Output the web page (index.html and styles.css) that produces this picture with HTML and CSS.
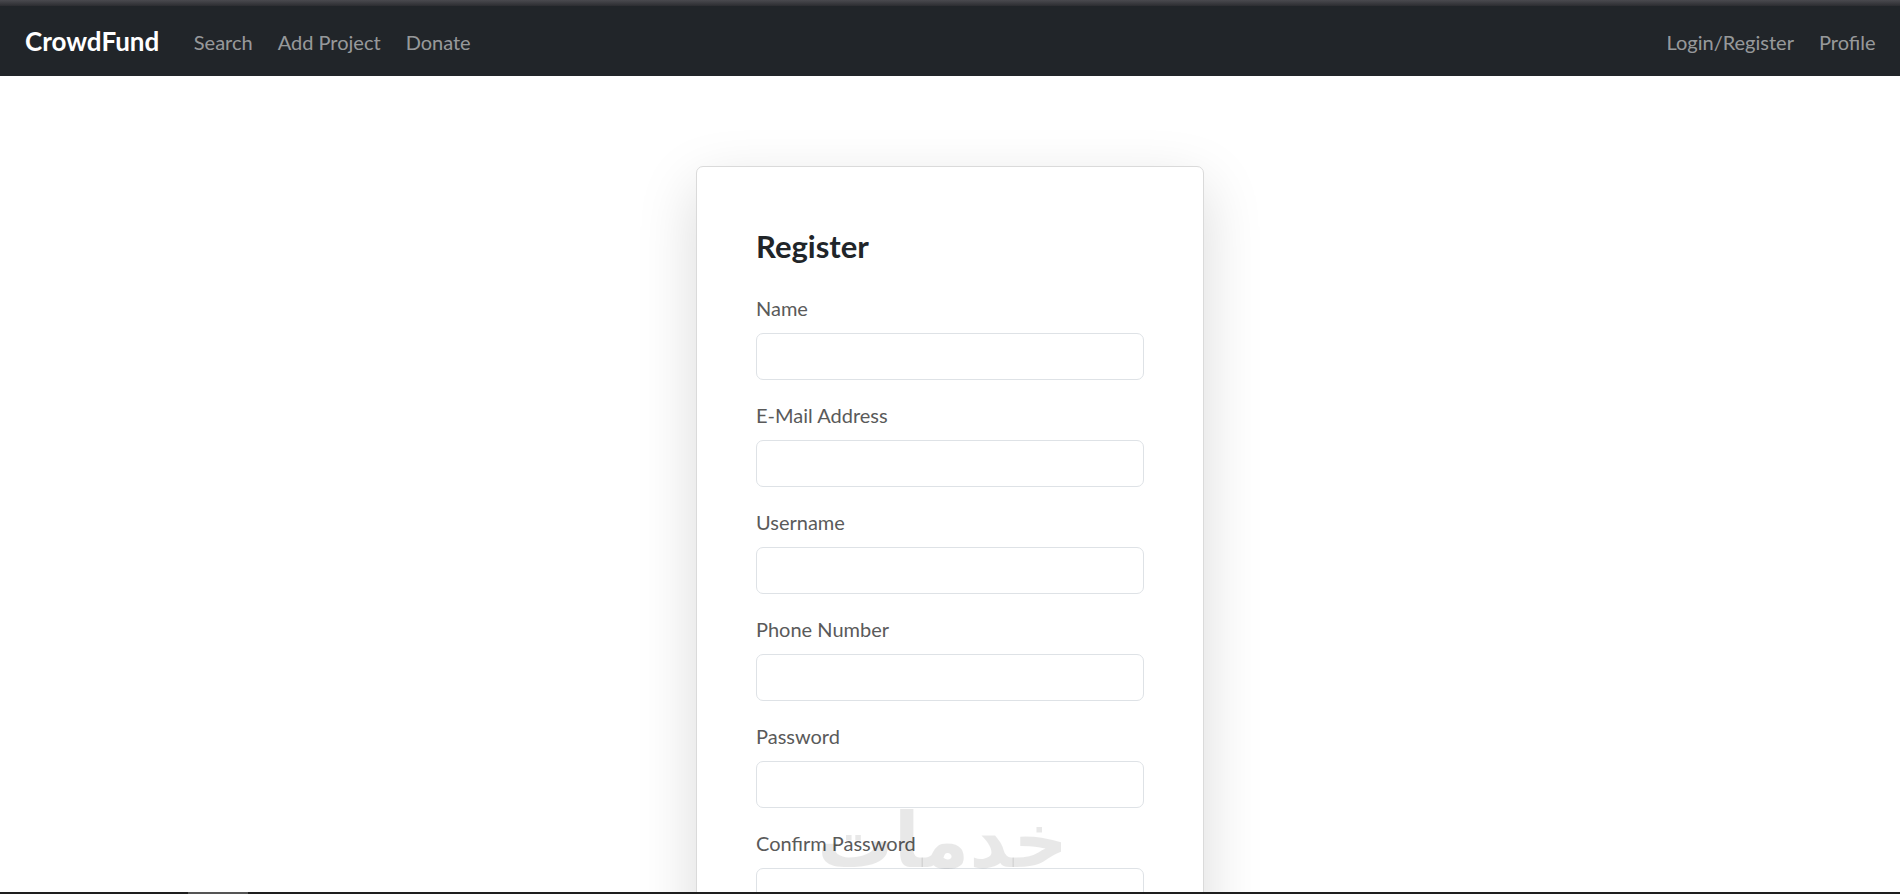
FILE: index.html
```html
<!DOCTYPE html>
<html lang="en">
<head>
    <meta charset="UTF-8">
    <meta name="viewport" content="width=device-width, initial-scale=1.0">
    <title>CrowdFund - Register</title>
    <link rel="stylesheet" href="styles.css">
</head>
<body>
    <div class="top-strip"></div>

    <!-- navbar -->
    <nav class="navbar">
        <div class="nav-left">
            <a href="#" class="brand">CrowdFund</a>
            <a href="#" class="nav-link">Search</a>
            <a href="#" class="nav-link">Add Project</a>
            <a href="#" class="nav-link">Donate</a>
        </div>
        <div class="nav-right">
            <a href="#" class="nav-link">Login/Register</a>
            <a href="#" class="nav-link">Profile</a>
        </div>
    </nav>

    <!-- register form -->
    <div class="page">
        <div class="card">
            <h3 class="card-title">Register</h3>
            <form>
                <div class="field">
                    <label for="name">Name</label>
                    <input type="text" id="name" class="input">
                </div>
                <div class="field">
                    <label for="email">E-Mail Address</label>
                    <input type="email" id="email" class="input">
                </div>
                <div class="field">
                    <label for="username">Username</label>
                    <input type="text" id="username" class="input">
                </div>
                <div class="field">
                    <label for="phone">Phone Number</label>
                    <input type="text" id="phone" class="input">
                </div>
                <div class="field">
                    <label for="password">Password</label>
                    <input type="password" id="password" class="input">
                </div>
                <div class="field">
                    <label for="confirm">Confirm Password</label>
                    <input type="password" id="confirm" class="input">
                </div>
                <button type="submit" class="btn">Register</button>
            </form>
        </div>
    </div>

    <div class="watermark" dir="rtl">خدمات</div>
    <div class="taskbar"><span class="task-item"></span></div>
</body>
</html>
```

FILE: styles.css
```css
body {
    font-family: Lato, "Open Sans", sans-serif;
    margin: 0;
    padding: 0;
    background-color: #fff;
    color: #212529;
}
a {
    text-decoration: none;
}
.top-strip {
    height: 6px;
    background: linear-gradient(#4a4a4f, #2c2d31);
}
.navbar {
    display: flex;
    justify-content: space-between;
    align-items: center;
    height: 70px;
    padding: 1px 12px 0 25px;
    box-sizing: border-box;
    background-color: #212529;
}
.nav-left, .nav-right {
    display: flex;
    align-items: center;
}
.brand {
    color: #fff;
    font-size: 26px;
    font-weight: 700;
    line-height: 37px;
    margin-right: 22px;
}
.nav-link {
    color: rgba(255, 255, 255, 0.55);
    font-size: 20px;
    line-height: 30px;
    padding: 10px 12.5px;
}
.page {
    padding-top: 90px;
}
.card {
    width: 508px;
    margin: 0 auto;
    box-sizing: border-box;
    padding: 61px 59px;
    background-color: #fff;
    border: 1px solid #dadada;
    border-radius: 7px;
    box-shadow: 0 20px 60px rgba(0, 0, 0, 0.15);
}
.card-title {
    font-size: 31px;
    font-weight: 700;
    line-height: 1.2;
    margin: 0 0 28px;
}
.field {
    margin-bottom: 20px;
}
.field label {
    display: block;
    color: #5a5a5a;
    font-size: 20px;
    line-height: 30px;
    margin-bottom: 10px;
}
.input {
    display: block;
    width: 100%;
    height: 47px;
    box-sizing: border-box;
    padding: 7px 15px;
    font-size: 20px;
    font-family: inherit;
    border: 1px solid #dee2e6;
    border-radius: 7px;
    background-color: #fff;
}
.btn {
    padding: 10px 20px;
    font-size: 20px;
    color: #fff;
    background-color: #0d6efd;
    border: none;
    border-radius: 7px;
}
/* watermark over the page */
.watermark {
    position: fixed;
    left: 832px;
    top: 796px;
    width: 236px;
    text-align: center;
    font-family: "DejaVu Sans", sans-serif;
    font-weight: 700;
    font-size: 76px;
    line-height: 90px;
    color: rgba(0, 0, 0, 0.09);
    pointer-events: none;
}
.taskbar {
    position: fixed;
    left: 0;
    right: 0;
    bottom: 0;
    height: 2px;
    background-color: #1e1e1e;
}
.task-item {
    display: block;
    margin-left: 188px;
    width: 60px;
    height: 2px;
    background-color: #555;
}
```
